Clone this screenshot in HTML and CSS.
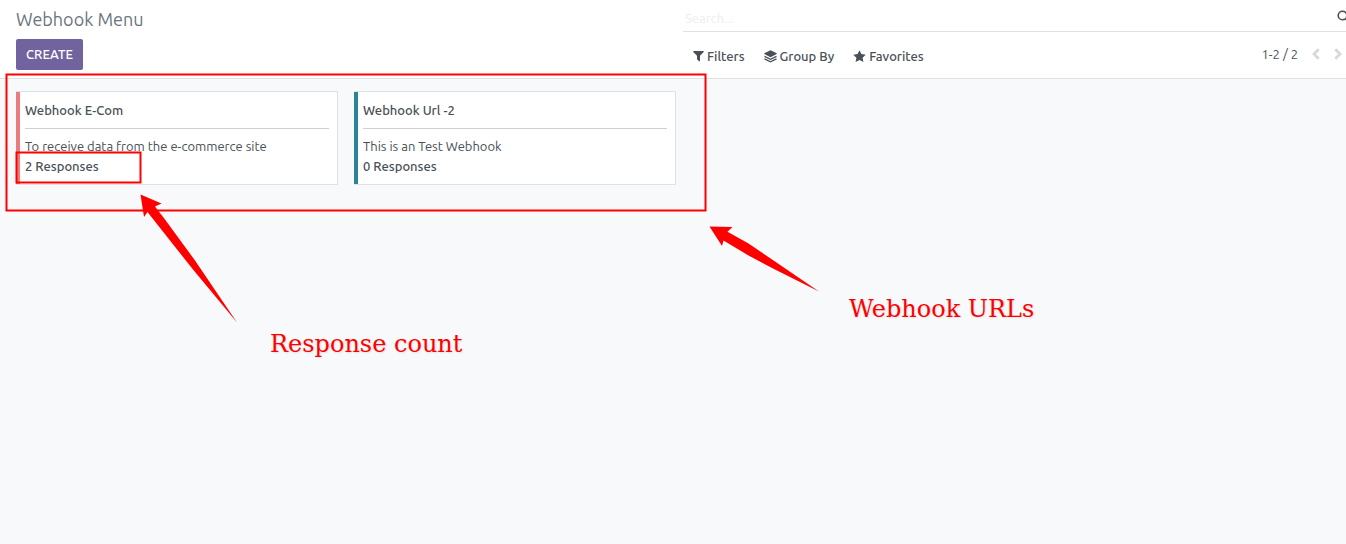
FILE: index.html
```html
<!DOCTYPE html>
<html lang="en">
<head>
<meta charset="utf-8">
<title>Webhook Menu</title>
<link rel="stylesheet" href="styles.css">
</head>
<body>
<header class="control-panel">
  <div class="panel-left">
    <h1 class="page-title">Webhook Menu</h1>
    <button class="create" type="button">CREATE</button>
  </div>
  <div class="panel-right">
    <div class="search">
      <input class="search-input" type="text" placeholder="Search..." aria-label="Search">
      <svg class="search-icon" viewBox="0 0 14 14" aria-hidden="true"><circle cx="5.5" cy="5.5" r="4.300" fill="none" stroke="currentColor" stroke-width="1.600"/><path d="M8.800 8.800l3.800 3.800" stroke="currentColor" stroke-width="2"/></svg>
    </div>
    <div class="tools">
      <div class="options">
        <button class="option" type="button"><svg class="icon-filter" viewBox="0 0 11 12" aria-hidden="true"><path d="M.6 1h9.800q.7.400.3 1L7 5.800V11q-.3.600-.9.200L4.200 9.500 4 9V5.800L.3 2Q0 1.300.6 1z" fill="currentColor"/></svg>Filters</button>
        <button class="option" type="button"><svg class="icon-group" viewBox="0 0 13 13" aria-hidden="true"><path d="M6.500.3L12.700 3.300v.8L6.500 7.200.3 4.100v-.8z" fill="currentColor"/><path d="M.5 6.400l6 2.900 6-2.900M.5 8.900l6 2.900 6-2.900" fill="none" stroke="currentColor" stroke-width="1.300"/></svg>Group By</button>
        <button class="option" type="button"><svg class="icon-star" viewBox="0 0 13 12" aria-hidden="true"><path d="M6.500.2l1.900 3.900 4.300.6-3.100 3 .8 4.200-3.900-2-3.900 2 .8-4.200-3.100-3 4.300-.6z" fill="currentColor"/></svg>Favorites</button>
      </div>
      <div class="pager">
        <span class="count">1-2 / 2</span>
        <button class="page-btn" type="button" aria-label="Previous"><svg class="chevron" viewBox="0 0 8 12" aria-hidden="true"><path d="M6.700 1.200L2 6l4.700 4.800" fill="none" stroke="currentColor" stroke-width="2.800"/></svg></button>
        <button class="page-btn" type="button" aria-label="Next"><svg class="chevron" viewBox="0 0 8 12" aria-hidden="true"><path d="M1.300 1.200L6 6l-4.700 4.800" fill="none" stroke="currentColor" stroke-width="2.800"/></svg></button>
      </div>
    </div>
  </div>
</header>
<main class="kanban">
  <article class="card">
    <span class="bar bar-red"></span>
    <div class="card-body">
      <h2 class="card-title">Webhook E-Com</h2>
      <hr class="rule">
      <p class="text">To receive data from the e-commerce site</p>
      <p class="text strong">2 Responses</p>
    </div>
  </article>
  <article class="card">
    <span class="bar bar-teal"></span>
    <div class="card-body">
      <h2 class="card-title">Webhook Url -2</h2>
      <hr class="rule">
      <p class="text">This is an Test Webhook</p>
      <p class="text strong">0 Responses</p>
    </div>
  </article>
</main>
<svg class="marks" width="840" height="340" aria-hidden="true">
  <g fill="none" stroke="#f00" stroke-width="2">
    <rect x="6.500" y="74.500" width="699" height="136"/>
    <rect x="16.500" y="152.500" width="124" height="30"/>
  </g>
  <g fill="#f00">
    <path d="M140.500 194.500L161.500 203.500 155 206.500 165 219.500 195 260.500 237 322.500 193 269.500 168 238 147.500 212 144 217z"/>
    <path d="M709.500 226.500L732.500 227 727.500 231.700 748.500 243.500 775 261.500 819 291.500 775 269.500 748.500 255.500 723.500 240.500 722 246z"/>
  </g>
</svg>
<span class="note note-count">Response count</span>
<span class="note note-urls">Webhook URLs</span>
</body>
</html>
```
FILE: styles.css
```css
* { box-sizing: border-box; }
body {
  margin: 0;
  position: relative;
  min-height: 100vh;
  overflow-x: hidden;
  background: #f8f9fb;
  color: #495057;
  font: 13px/20px Ubuntu, "Noto Sans", sans-serif;
}
button { border: 0; padding: 0; background: none; color: inherit; font: inherit; }
h1, h2, p { margin: 0; }
svg { display: block; flex: none; }

.control-panel {
  display: grid;
  grid-template-columns: 1fr 1fr;
  column-gap: 16px;
  padding-left: 16px;
  overflow: hidden;
  background: #fff;
  border-bottom: 1px solid #dee2e6;
}
.panel-left { padding: 7px 0 8px; }
.page-title { margin-bottom: 8px; color: #6c757d; font-size: 18px; font-weight: 400; line-height: 24px; }
.create {
  height: 31px;
  padding: 0 10px 2px;
  border-radius: 2px;
  background: #71639e;
  color: #fff;
  font-weight: 500;
}
.search { display: flex; align-items: center; height: 32px; margin-left: -6px; border-bottom: 1px solid #dee2e6; }
.search-input {
  flex: 1;
  min-width: 0;
  padding: 4px 2px 0;
  border: 0;
  outline: 0;
  background: none;
  color: inherit;
  font: inherit;
}
.search-input::placeholder { color: #eceeef; opacity: 1; }
.search-icon { width: 14px; height: 14px; margin: 2px -5px 0 0; }

.tools { display: flex; align-items: center; justify-content: space-between; height: 46px; padding: 2px 4px 0; }
.options { display: flex; gap: 19px; }
.option { display: flex; align-items: center; gap: 3px; font-weight: 500; }
.icon-filter { width: 11px; height: 12px; }
.icon-group { width: 13px; height: 13px; }
.icon-star { width: 13px; height: 12px; }
.pager { display: flex; align-items: center; gap: 14px; padding-bottom: 4px; }
.page-btn { color: #d5d8dc; }
.chevron { width: 8px; height: 12px; }

.kanban { display: flex; flex-wrap: wrap; gap: 16px; padding: 12px 16px; }
.card {
  display: flex;
  flex: 0 1 322px;
  border: 1px solid #dee2e6;
  border-left: 0;
  background: #fff;
}
.bar { flex: none; width: 4px; }
.bar-red { background: #ea7c7f; }
.bar-teal { background: #2c8397; }
.card-body { flex: 1; min-width: 0; padding: 8px 8px 8px 5px; }
.card-title, .strong { font-size: 13px; font-weight: 500; line-height: 20px; }
.rule { margin: 8px 0 7px; border: 0; border-top: 1px solid #ced1d4; }

.marks { position: absolute; top: 0; left: 0; pointer-events: none; }
.note {
  position: absolute;
  color: #f00;
  font: 24px/28px "DejaVu Serif", serif;
  text-shadow: 1px 1px 2px rgba(0, 0, 0, .1);
  white-space: nowrap;
}
.note-count { left: 270px; top: 330px; }
.note-urls { left: 849px; top: 295px; }
```
